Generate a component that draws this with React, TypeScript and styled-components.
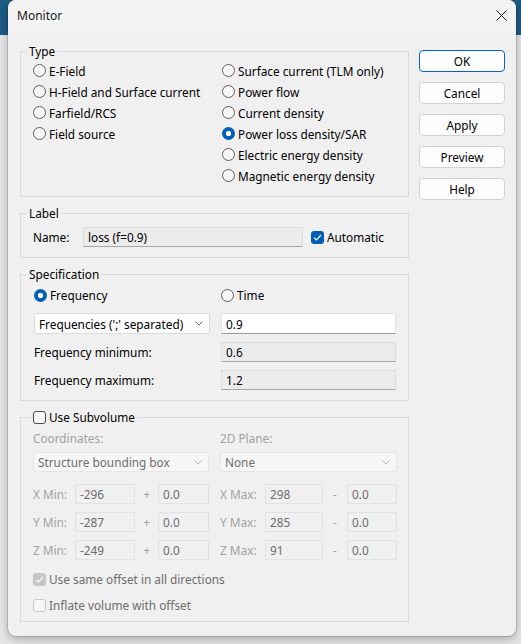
import styled, { createGlobalStyle, css } from "styled-components";

const GlobalStyle = createGlobalStyle`
  html, body { margin: 0; padding: 0; }
  body { background: #e6e6e6; font-family: "Noto Sans", sans-serif; }
`;

const Page = styled.div`
  width: 521px;
  height: 644px;
  overflow: hidden;
  box-sizing: border-box;
  padding-left: 8px;
  background: linear-gradient(#1d5b84 0 35px, #e6e6e6 35px);
`;

const Dialog = styled.div`
  width: 508px;
  height: 636px;
  background: #f0f0f0;
  border-radius: 8px;
  box-shadow: 0 0 0 1px rgba(0, 0, 0, 0.12), 0 3px 10px rgba(0, 0, 0, 0.28);
  overflow: hidden;
  display: flex;
  flex-direction: column;
`;

const TitleBar = styled.div`
  height: 31px;
  flex: none;
  display: flex;
  align-items: center;
  justify-content: space-between;
  padding: 0 9px 0 9px;
  background: #f3f3f3;
  font-family: "Noto Sans", sans-serif;
  font-size: 12px;
  color: #1a1a1a;
`;

const Body = styled.div`
  display: flex;
  gap: 10px;
  padding: 13px 11px 0 12px;
  font-family: "Noto Sans", sans-serif;
  font-size: 11.8px;
  color: #000;
`;

const LeftCol = styled.div`
  width: 389px;
  display: flex;
  flex-direction: column;
  gap: 9px;
`;

const ButtonCol = styled.div`
  display: flex;
  flex-direction: column;
  gap: 10px;
  padding-top: 6px;
`;

const Button = styled.button<{ $default?: boolean }>`
  width: 86px;
  height: 22px;
  padding: 0;
  border-radius: 4px;
  background: #fdfdfd;
  border: 1px solid ${(p) => (p.$default ? "#0067c0" : "#d3d3d3")};
  font-family: "Noto Sans", sans-serif;
  font-size: 11.8px;
  color: #000;
`;

const Group = styled.fieldset<{ $pad: string }>`
  margin: 0;
  min-width: 0;
  padding: ${(p) => p.$pad};
  border: 1px solid #dadada;
`;

const Legend = styled.legend<{ $indent?: number }>`
  margin-left: ${(p) => p.$indent ?? 6}px;
  padding: 0 2px;
  font-size: 11.8px;
  line-height: 14px;
  display: flex;
  align-items: center;
  gap: 3px;
`;

const Inner = styled.div<{ $indent: number }>`
  padding-left: ${(p) => p.$indent}px;
`;

const TypeColumns = styled(Inner)`
  display: grid;
  grid-template-columns: 189px 1fr;
`;

const OptionList = styled.div`
  display: flex;
  flex-direction: column;
`;

const OptionRow = styled.label<{ $h?: number; $muted?: boolean }>`
  height: ${(p) => p.$h ?? 21}px;
  display: flex;
  align-items: center;
  gap: 3px;
  white-space: nowrap;
  color: ${(p) => (p.$muted ? "#6d6d6d" : "#000")};
`;

const RadioDot = styled.span<{ $checked?: boolean }>`
  width: 13px;
  height: 13px;
  flex: none;
  box-sizing: border-box;
  border-radius: 50%;
  ${(p) =>
    p.$checked
      ? css`
          background: radial-gradient(circle, #fff 0 2.4px, #005fb8 3px);
        `
      : css`
          background: #f7f7f7;
          border: 1px solid #5e5e5e;
        `}
`;

const CheckBox = styled.span<{ $checked?: boolean; $disabled?: boolean }>`
  width: 13px;
  height: 13px;
  flex: none;
  box-sizing: border-box;
  border-radius: 3px;
  display: flex;
  align-items: center;
  justify-content: center;
  ${(p) =>
    p.$checked
      ? css`
          background: ${p.$disabled ? "#c6c6c6" : "#005fb8"};
        `
      : css`
          background: #f7f7f7;
          border: 1px solid ${p.$disabled ? "#c8c8c8" : "#4a4a4a"};
        `}
`;

const NameRow = styled(Inner)`
  display: flex;
  align-items: center;
  height: 20px;
`;

const NameLabel = styled.span`
  width: 50px;
`;

const Field = styled.div<{ $variant: "white" | "readonly" | "disabled"; $w?: number }>`
  box-sizing: border-box;
  height: 100%;
  width: ${(p) => (p.$w ? `${p.$w}px` : "100%")};
  display: flex;
  align-items: center;
  padding: 0 4px;
  white-space: nowrap;
  ${(p) =>
    p.$variant === "white"
      ? css`
          background: #fff;
          border: 1px solid #e3e3e3;
          border-bottom-color: #9a9a9a;
          color: #000;
        `
      : p.$variant === "readonly"
      ? css`
          background: #ececec;
          border: 1px solid #dcdcdc;
          border-bottom-color: #a8a8a8;
          color: #000;
        `
      : css`
          background: #f0f0f0;
          border: 1px solid #e2e2e2;
          color: #6d6d6d;
        `}
`;

const Combo = styled.div<{ $disabled?: boolean }>`
  box-sizing: border-box;
  height: 100%;
  display: flex;
  align-items: center;
  justify-content: space-between;
  padding: 0 6px 0 4px;
  border-radius: 2px;
  white-space: nowrap;
  background: ${(p) => (p.$disabled ? "#f6f6f6" : "#fdfdfd")};
  border: 1px solid ${(p) => (p.$disabled ? "#e6e6e6" : "#dcdcdc")};
  color: ${(p) => (p.$disabled ? "#6d6d6d" : "#000")};
`;

const AutoCheck = styled.label`
  display: flex;
  align-items: center;
  gap: 3px;
  margin-left: 8px;
`;

const SpecGrid = styled(Inner)`
  display: grid;
  grid-template-columns: 176px 175px;
  grid-template-rows: 20px 21px 20px 20px;
  column-gap: 11px;
  row-gap: 8px;
`;

const Cell = styled.div`
  display: flex;
  align-items: center;
  min-width: 0;
  white-space: nowrap;
`;

const SubStack = styled(Inner)`
  display: flex;
  flex-direction: column;
`;

const TwoCol = styled.div<{ $h: number; $mt?: number }>`
  display: grid;
  grid-template-columns: 176px 177px;
  column-gap: 11px;
  height: ${(p) => p.$h}px;
  margin-top: ${(p) => p.$mt ?? 0}px;
`;

const Muted = styled.span`
  color: #a3a3a3;
  display: flex;
  align-items: center;
  white-space: nowrap;
`;

const OffsetRow = styled.div<{ $mt: number }>`
  display: grid;
  grid-template-columns: 42px 60px 23px 51px 56px 58px 24px 50px;
  height: 20px;
  margin-top: ${(p) => p.$mt}px;
  & > *:nth-child(5) {
    padding-left: 11px;
  }
`;

const Sign = styled.span`
  color: #a3a3a3;
  display: flex;
  align-items: center;
  justify-content: center;
`;

const Spacer = styled.div<{ $h: number }>`
  height: ${(p) => p.$h}px;
`;

function Chevron({ color }: { color: string }) {
  return (
    <svg width="8" height="5" viewBox="0 0 8 5">
      <path d="M0.5 0.5 L4 4 L7.5 0.5" fill="none" stroke={color} strokeWidth="1" />
    </svg>
  );
}

function Tick() {
  return (
    <svg width="9" height="7" viewBox="0 0 9 7">
      <path d="M1 3.6 L3.4 6 L8 1" fill="none" stroke="#fff" strokeWidth="1.2" />
    </svg>
  );
}

function Radio({ label, checked, h }: { label: string; checked?: boolean; h?: number }) {
  return (
    <OptionRow $h={h}>
      <RadioDot $checked={checked} />
      {label}
    </OptionRow>
  );
}

const leftTypes = ["E-Field", "H-Field and Surface current", "Farfield/RCS", "Field source"];
const rightTypes = [
  "Surface current (TLM only)",
  "Power flow",
  "Current density",
  "Power loss density/SAR",
  "Electric energy density",
  "Magnetic energy density",
];

const offsets = [
  { axis: "X", min: "-296", max: "298", mt: 12 },
  { axis: "Y", min: "-287", max: "285", mt: 8 },
  { axis: "Z", min: "-249", max: "91", mt: 8 },
];

export default function App() {
  return (
    <>
      <GlobalStyle />
      <Page>
        <Dialog>
          <TitleBar>
            Monitor
            <svg width="11" height="11" viewBox="0 0 11 11">
              <path d="M0.5 0.5 L10.5 10.5 M10.5 0.5 L0.5 10.5" stroke="#1a1a1a" strokeWidth="1" />
            </svg>
          </TitleBar>
          <Body>
            <LeftCol>
              <Group $pad="2px 0 10px 0">
                <Legend>Type</Legend>
                <TypeColumns $indent={12}>
                  <OptionList>
                    {leftTypes.map((t) => (
                      <Radio key={t} label={t} />
                    ))}
                  </OptionList>
                  <OptionList>
                    {rightTypes.map((t) => (
                      <Radio key={t} label={t} checked={t === "Power loss density/SAR"} />
                    ))}
                  </OptionList>
                </TypeColumns>
              </Group>

              <Group $pad="7px 0 10px 0">
                <Legend>Label</Legend>
                <NameRow $indent={12}>
                  <NameLabel>Name:</NameLabel>
                  <Field $variant="readonly" $w={220}>
                    loss (f=0.9)
                  </Field>
                  <AutoCheck>
                    <CheckBox $checked>
                      <Tick />
                    </CheckBox>
                    Automatic
                  </AutoCheck>
                </NameRow>
              </Group>

              <Group $pad="4px 0 10px 0">
                <Legend>Specification</Legend>
                <SpecGrid $indent={13}>
                  <Cell>
                    <Radio label="Frequency" checked h={20} />
                  </Cell>
                  <Cell>
                    <Radio label="Time" h={20} />
                  </Cell>
                  <Combo>
                    Frequencies (';' separated)
                    <Chevron color="#606060" />
                  </Combo>
                  <Field $variant="white">0.9</Field>
                  <Cell>Frequency minimum:</Cell>
                  <Field $variant="readonly">0.6</Field>
                  <Cell>Frequency maximum:</Cell>
                  <Field $variant="readonly">1.2</Field>
                </SpecGrid>
              </Group>

              <Group $pad="6px 0 9px 0">
                <Legend $indent={10}>
                  <CheckBox />
                  Use Subvolume
                </Legend>
                <SubStack $indent={12}>
                  <TwoCol $h={14}>
                    <Muted>Coordinates:</Muted>
                    <Muted>2D Plane:</Muted>
                  </TwoCol>
                  <TwoCol $h={20} $mt={8}>
                    <Combo $disabled>
                      Structure bounding box
                      <Chevron color="#b5b5b5" />
                    </Combo>
                    <Combo $disabled>
                      None
                      <Chevron color="#b5b5b5" />
                    </Combo>
                  </TwoCol>
                  {offsets.map((o) => (
                    <OffsetRow key={o.axis} $mt={o.mt}>
                      <Muted>{o.axis} Min:</Muted>
                      <Field $variant="disabled">{o.min}</Field>
                      <Sign>+</Sign>
                      <Field $variant="disabled">0.0</Field>
                      <Muted>{o.axis} Max:</Muted>
                      <Field $variant="disabled">{o.max}</Field>
                      <Sign>-</Sign>
                      <Field $variant="disabled">0.0</Field>
                    </OffsetRow>
                  ))}
                  <Spacer $h={12} />
                  <OptionRow $h={14} $muted>
                    <CheckBox $checked $disabled>
                      <Tick />
                    </CheckBox>
                    Use same offset in all directions
                  </OptionRow>
                  <Spacer $h={12} />
                  <OptionRow $h={14} $muted>
                    <CheckBox $disabled />
                    Inflate volume with offset
                  </OptionRow>
                </SubStack>
              </Group>
            </LeftCol>

            <ButtonCol>
              <Button $default>OK</Button>
              <Button>Cancel</Button>
              <Button>Apply</Button>
              <Button>Preview</Button>
              <Button>Help</Button>
            </ButtonCol>
          </Body>
        </Dialog>
      </Page>
    </>
  );
}
